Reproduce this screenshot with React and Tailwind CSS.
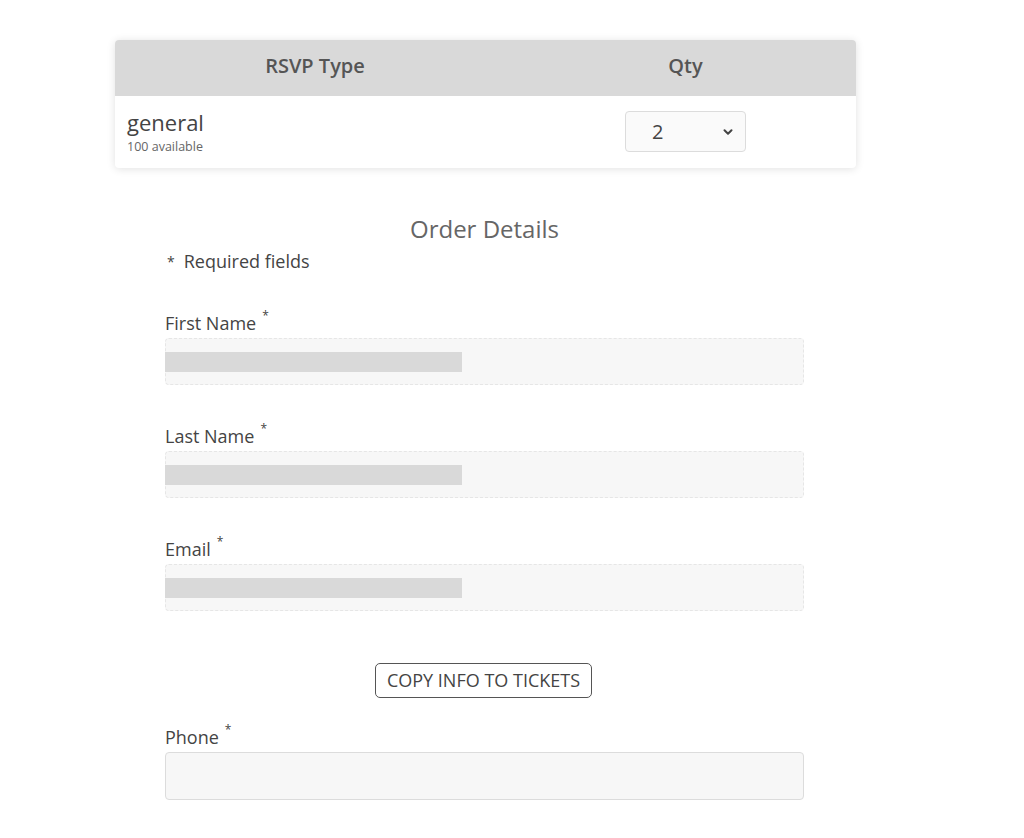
import { ChevronDown } from "lucide-react";

const fields = [
  { label: "First Name", redacted: true },
  { label: "Last Name", redacted: true },
  { label: "Email", redacted: true },
];

const Field = ({ label, redacted, solid }) => (
  <div className="flex flex-col">
    <label className="h-6 flex items-center text-[18px] text-[#444]">
      {label}
      <sup className="ml-[6px] text-[12px] relative -top-[7px]">*</sup>
    </label>
    <div
      className={`mt-[3px] flex items-center rounded-[4px] bg-[#f7f7f7] ${
        solid ? "h-[48px] border border-[#dcdcdc]" : "h-[47px] border border-dashed border-[#e6e6e6]"
      }`}
    >
      {redacted && <div className="w-[297px] h-[20px] bg-[#d9d9d9] -ml-px" />}
    </div>
  </div>
);

export default function App() {
  return (
    <div className="min-h-screen bg-white pt-[40px] pb-10 font-['Open_Sans',sans-serif] text-[#444]">
      <div className="ml-[115px] w-[741px] rounded-[4px] overflow-hidden bg-white shadow-[0_1px_8px_rgba(0,0,0,0.12)]">
        <div className="flex h-[56px] bg-[#d9d9d9] text-[20px] font-semibold text-[#555] pb-[5px]">
          <div className="w-[400px] flex items-center justify-center">RSVP Type</div>
          <div className="flex-1 flex items-center justify-center">Qty</div>
        </div>
        <div className="flex h-[72px]">
          <div className="w-[400px] pl-3 pt-[13px] flex flex-col">
            <span className="text-[22px] leading-[26px] text-[#444]">general</span>
            <span className="text-[12.5px] leading-[15px] text-[#666] mt-[4px]">100 available</span>
          </div>
          <div className="flex-1 flex items-center pl-[110px]">
            <div className="w-[121px] h-[41px] mt-[-1px] flex items-center justify-between pl-[26px] pr-[10px] rounded-[4px] border border-[#dcdcdc] bg-[#fafafa] text-[20px] text-[#444]">
              <span>2</span>
              <ChevronDown className="w-[14px] h-[14px]" strokeWidth={3.5} />
            </div>
          </div>
        </div>
      </div>

      <div className="ml-[165px] w-[639px] mt-[47px]">
        <h2 className="text-center text-[24px] leading-[28px] text-[#666]">Order Details</h2>
        <p className="mt-[6px] h-6 flex items-center text-[18px] text-[#444]">
          <span className="text-[14px] mr-[9px] ml-[2px]">*</span>Required fields
        </p>

        <div className="mt-[38px] flex flex-col gap-[39px]">
          {fields.map((f) => (
            <Field key={f.label} {...f} />
          ))}
        </div>

        <div className="mt-[52px] flex justify-center">
          <button className="ml-[-2px] w-[217px] h-[35px] rounded-[5px] border border-[#555] text-[18px] text-[#444] bg-white">
            COPY INFO TO TICKETS
          </button>
        </div>

        <div className="mt-[27px]">
          <Field label="Phone" solid />
        </div>
      </div>
    </div>
  );
}
